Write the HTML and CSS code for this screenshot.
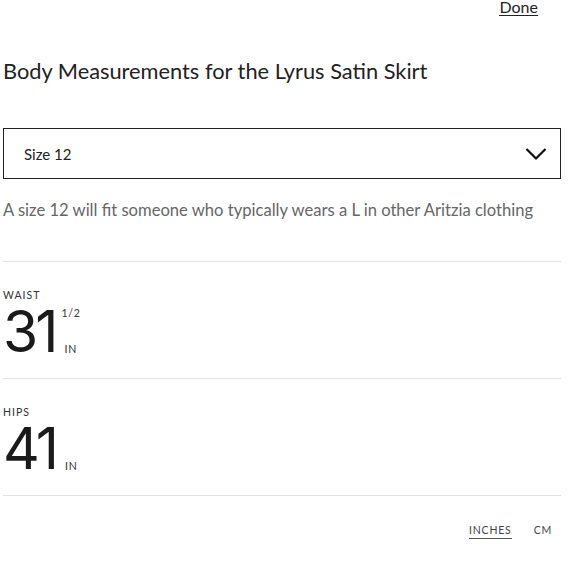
FILE: index.html
```html
<!DOCTYPE html>
<html lang="en">
<head>
<meta charset="utf-8">
<link rel="stylesheet" href="styles.css">
</head>
<body>
<div class="page">
  <div class="top">
    <a class="done" href="#">Done</a>
  </div>
  <h1 class="title">Body Measurements for the Lyrus Satin Skirt</h1>
  <div class="select">
    <span class="select-text">Size 12</span>
    <svg class="chev" width="22" height="14" viewBox="0 0 22 14"><path d="M1.5 2 L11 11.5 L20.5 2" fill="none" stroke="#111" stroke-width="2.2"/></svg>
  </div>
  <p class="desc">A size 12 will fit someone who typically wears a L in other Aritzia clothing</p>
  <div class="measure">
    <div class="label">WAIST</div>
    <div class="value">
      <span class="num">31</span>
      <span class="side"><span class="frac">1/2</span><span class="unit">IN</span></span>
    </div>
  </div>
  <div class="measure">
    <div class="label">HIPS</div>
    <div class="value">
      <span class="num">41</span>
      <span class="side"><span class="frac"></span><span class="unit">IN</span></span>
    </div>
  </div>
  <div class="units">
    <a class="unit-link active" href="#">INCHES</a>
    <a class="unit-link" href="#">CM</a>
  </div>
</div>
</body>
</html>
```
FILE: styles.css
```css
html, body {
  margin: 0;
  padding: 0;
  background: #fff;
}
body {
  font-family: Lato, "Noto Sans", sans-serif;
  color: #222;
}
.page {
  width: 558px;
  padding-left: 3px;
}
.top {
  display: flex;
  justify-content: flex-end;
  align-items: flex-start;
  height: 20px;
  padding-right: 23px;
}
.done {
  font-size: 16px;
  line-height: 14px;
  color: #222;
  text-decoration: none;
  border-bottom: 1px solid #222;
  padding-bottom: 1px;
}
.title {
  margin: 37px 0 0 0;
  font-size: 21.8px;
  line-height: 28px;
  font-weight: 400;
  color: #222;
}
.select {
  margin-top: 43px;
  height: 49px;
  border: 1.5px solid #222;
  display: flex;
  align-items: center;
  justify-content: space-between;
  padding: 0 13px 0 20px;
}
.select-text {
  font-size: 15px;
  color: #222;
}
.desc {
  margin: 20px 0 0 0;
  font-size: 16.6px;
  line-height: 22px;
  color: #666;
}
.measure {
  border-top: 1px solid #e2e2e2;
  margin-top: 40px;
  padding-top: 27px;
  height: 89px;
}
.measure + .measure {
  margin-top: 0;
}
.label {
  font-size: 10.5px;
  letter-spacing: 1px;
  line-height: 12px;
  color: #333;
}
.value {
  display: flex;
  align-items: stretch;
}
.num {
  font-family: Inter, "Liberation Sans", sans-serif;
  font-size: 57px;
  line-height: 62px;
  letter-spacing: -3px;
  color: #1a1a1a;
}
.side {
  display: flex;
  flex-direction: column;
  justify-content: space-between;
  padding-left: 6px;
  font-size: 10.5px;
  letter-spacing: 0.8px;
  color: #333;
}
.frac {
  height: 12px;
  line-height: 12px;
  margin-top: 6px;
}
.unit {
  line-height: 12px;
  padding-left: 3px;
  margin-bottom: 8px;
}
.units {
  border-top: 1px solid #e2e2e2;
  display: flex;
  justify-content: flex-end;
  align-items: flex-start;
  gap: 22px;
  padding: 28px 9px 0 0;
}
.unit-link {
  font-size: 10.5px;
  line-height: 12px;
  letter-spacing: 0.8px;
  color: #444;
  text-decoration: none;
  padding-bottom: 2px;
  border-bottom: 1px solid transparent;
}
.unit-link.active {
  border-bottom-color: #555;
}
```
